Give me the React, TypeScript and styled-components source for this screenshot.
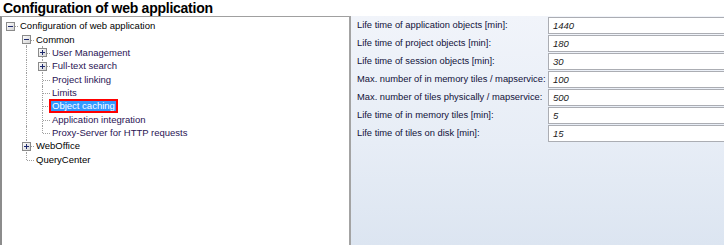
import React from 'react';
import styled, { createGlobalStyle } from 'styled-components';

const Global = createGlobalStyle`
  html, body { margin: 0; padding: 0; background: #ffffff; }
  body {
    font-family: "Liberation Sans", Arial, sans-serif;
    width: 724px;
    height: 245px;
    overflow: hidden;
  }
`;

const Page = styled.div`
  display: flex;
  flex-direction: column;
  width: 724px;
  height: 245px;
`;

const Title = styled.h1`
  margin: 0;
  height: 16px;
  box-sizing: border-box;
  padding: 1px 0 0 3px;
  font-size: 14px;
  line-height: 15px;
  font-weight: bold;
  letter-spacing: -0.25px;
  color: #000;
  white-space: nowrap;
`;

const Main = styled.div`
  flex: 1;
  display: flex;
  min-height: 0;
`;

const TreePanel = styled.div`
  width: 349px;
  box-sizing: border-box;
  background: #fff;
  border-top: 1px solid #a0a0a0;
  border-left: 2px solid #8c8c8c;
  padding-top: 2.6px;
  display: flex;
  flex-direction: column;
`;

const Splitter = styled.div`
  width: 2px;
  background: #a3a3a3;
`;

const PropsPanel = styled.div`
  flex: 1;
  background: linear-gradient(to bottom, #f1f4fa 0%, #e7edf6 55%, #dce5f1 100%);
  padding: 1px 0 0 6px;
  display: grid;
  grid-template-columns: 191px 1fr;
  grid-auto-rows: 17px;
  row-gap: 1px;
  align-content: start;
`;

const PropLabel = styled.div`
  font-size: 9.35px;
  line-height: 17px;
  color: #12123a;
  white-space: nowrap;
`;

const Field = styled.div`
  box-sizing: border-box;
  height: 17px;
  background: #fff;
  border: 1px solid #abadb3;
  border-right: none;
  padding-left: 4px;
  font-size: 9.5px;
  font-style: italic;
  line-height: 15px;
  color: #1a1a1a;
`;

const Row = styled.div`
  height: 13.33px;
  display: flex;
  align-items: center;
  flex-shrink: 0;
`;

const GuideCell = styled.div<{ $line: boolean }>`
  width: 16px;
  align-self: stretch;
  position: relative;
  flex-shrink: 0;
  &::before {
    content: '';
    display: ${(p) => (p.$line ? 'block' : 'none')};
    position: absolute;
    left: 8px;
    top: 0;
    bottom: 0;
    border-left: 1px dotted #a0a0a0;
  }
`;

const OwnCell = styled.div<{ $top: boolean; $bottom: boolean }>`
  width: 16px;
  align-self: stretch;
  position: relative;
  flex-shrink: 0;
  display: flex;
  align-items: center;
  padding-left: 4px;
  box-sizing: border-box;
  &::before {
    content: '';
    display: ${(p) => (p.$top || p.$bottom ? 'block' : 'none')};
    position: absolute;
    left: 8px;
    top: ${(p) => (p.$top ? '0' : '50%')};
    bottom: ${(p) => (p.$bottom ? '0' : '50%')};
    border-left: 1px dotted #a0a0a0;
  }
  &::after {
    content: '';
    position: absolute;
    left: 9px;
    right: 0;
    top: 50%;
    border-top: 1px dotted #a0a0a0;
  }
`;

const ExpanderBox = styled.svg`
  position: relative;
  z-index: 1;
  display: block;
  width: 9px;
  height: 9px;
`;

const TreeLabel = styled.span<{ $selected?: boolean; $tone: 'main' | 'child' }>`
  margin-left: -1px;
  padding: 0 1px;
  border: 2px solid ${(p) => (p.$selected ? '#ff0000' : 'transparent')};
  background: ${(p) => (p.$selected ? '#3399ff' : 'transparent')};
  color: ${(p) => (p.$selected ? '#ffffff' : p.$tone === 'child' ? '#2a1454' : '#000000')};
  font-size: 9.5px;
  line-height: 10px;
  white-space: nowrap;
  position: relative;
  z-index: 1;
`;

type Expander = 'plus' | 'minus' | 'none';

type TreeRow = {
  label: string;
  guides: boolean[];
  top: boolean;
  bottom: boolean;
  expander: Expander;
  tone: 'main' | 'child';
  selected?: boolean;
};

const childGuides = [false, true];

const rows: TreeRow[] = [
  { label: 'Configuration of web application', guides: [], top: false, bottom: false, expander: 'minus', tone: 'main' },
  { label: 'Common', guides: [false], top: false, bottom: true, expander: 'minus', tone: 'main' },
  { label: 'User Management', guides: childGuides, top: true, bottom: true, expander: 'plus', tone: 'child' },
  { label: 'Full-text search', guides: childGuides, top: true, bottom: true, expander: 'plus', tone: 'child' },
  { label: 'Project linking', guides: childGuides, top: true, bottom: true, expander: 'none', tone: 'child' },
  { label: 'Limits', guides: childGuides, top: true, bottom: true, expander: 'none', tone: 'child' },
  { label: 'Object caching', guides: childGuides, top: true, bottom: true, expander: 'none', tone: 'child', selected: true },
  { label: 'Application integration', guides: childGuides, top: true, bottom: true, expander: 'none', tone: 'child' },
  { label: 'Proxy-Server for HTTP requests', guides: childGuides, top: true, bottom: false, expander: 'none', tone: 'child' },
  { label: 'WebOffice', guides: [false], top: true, bottom: true, expander: 'plus', tone: 'main' },
  { label: 'QueryCenter', guides: [false], top: true, bottom: false, expander: 'none', tone: 'main' },
];

const props: { label: string; value: string }[] = [
  { label: 'Life time of application objects [min]:', value: '1440' },
  { label: 'Life time of project objects [min]:', value: '180' },
  { label: 'Life time of session objects [min]:', value: '30' },
  { label: 'Max. number of in memory tiles / mapservice:', value: '100' },
  { label: 'Max. number of tiles physically / mapservice:', value: '500' },
  { label: 'Life time of in memory tiles [min]:', value: '5' },
  { label: 'Life time of tiles on disk [min]:', value: '15' },
];

function ExpanderIcon({ kind }: { kind: 'plus' | 'minus' }) {
  return (
    <ExpanderBox viewBox="0 0 9 9">
      <defs>
        <linearGradient id={`g-${kind}`} x1="0" y1="0" x2="1" y2="1">
          <stop offset="0" stopColor="#ffffff" />
          <stop offset="1" stopColor="#d2d2d2" />
        </linearGradient>
      </defs>
      <rect x="0.5" y="0.5" width="8" height="8" fill={`url(#g-${kind})`} stroke="#8a8a8a" />
      <line x1="2" y1="4.5" x2="7" y2="4.5" stroke="#1e2a6e" />
      {kind === 'plus' && <line x1="4.5" y1="2" x2="4.5" y2="7" stroke="#1e2a6e" />}
    </ExpanderBox>
  );
}

export default function App() {
  return (
    <>
      <Global />
      <Page>
        <Title>Configuration of web application</Title>
        <Main>
          <TreePanel>
            {rows.map((r) => (
              <Row key={r.label}>
                {r.guides.map((g, i) => (
                  <GuideCell key={i} $line={g} />
                ))}
                <OwnCell $top={r.top} $bottom={r.bottom}>
                  {r.expander !== 'none' && <ExpanderIcon kind={r.expander} />}
                </OwnCell>
                <TreeLabel $selected={r.selected} $tone={r.tone}>
                  {r.label}
                </TreeLabel>
              </Row>
            ))}
          </TreePanel>
          <Splitter />
          <PropsPanel>
            {props.map((p) => (
              <React.Fragment key={p.label}>
                <PropLabel>{p.label}</PropLabel>
                <Field>{p.value}</Field>
              </React.Fragment>
            ))}
          </PropsPanel>
        </Main>
      </Page>
    </>
  );
}
